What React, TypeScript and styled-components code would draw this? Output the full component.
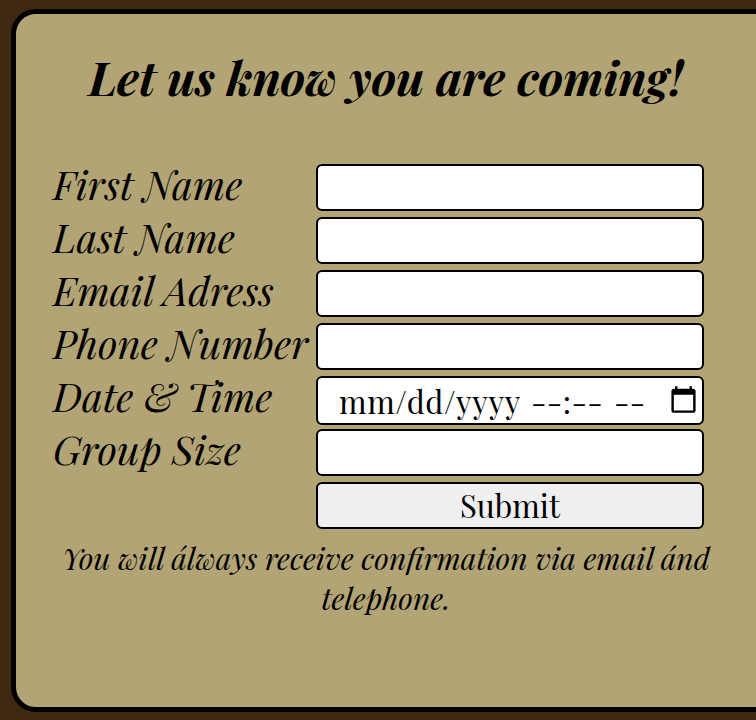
import React from "react";
import styled, { createGlobalStyle } from "styled-components";

const FONT = `"Playfair Display", "Liberation Serif", serif`;

const GlobalStyle = createGlobalStyle`
  *, *::before, *::after { box-sizing: border-box; }
  html, body { margin: 0; height: 720px; overflow: hidden; }
  body { background: #402913; color: #000; font-family: ${FONT}; }
`;

const Page = styled.main`
  height: 720px;
  padding: 9px 0 8px 11px;
  overflow: hidden;
`;

const Card = styled.section`
  width: 790px;
  height: 703px;
  padding: 36px 37px 0;
  border: 5px solid #000;
  border-radius: 25px;
  background: #b2a474;
`;

const Title = styled.h1`
  width: 666px;
  height: 54px;
  margin: 0 0 60px;
  font-size: 47px;
  line-height: 54px;
  font-style: italic;
  font-weight: 700;
  letter-spacing: -0.15px;
  text-align: center;
  white-space: nowrap;
`;

const Row = styled.div`
  display: grid;
  grid-template-columns: 263px 388px;
  align-items: start;
  height: 53px;
`;

const Label = styled.label`
  height: 47px;
  font-size: 40px;
  line-height: 40px;
  font-style: italic;
  white-space: nowrap;
`;

const Input = styled.input`
  width: 388px;
  height: 47px;
  padding: 0 20px;
  border: 2px solid #000;
  border-radius: 6px;
  background: #fff;
  font: 32px ${FONT};
  outline: none;
`;

const DateField = styled.div`
  display: flex;
  align-items: center;
  width: 388px;
  height: 49px;
  padding: 0 4px 0 21px;
  border: 2px solid #000;
  border-radius: 6px;
  background: #fff;
  font-size: 31px;
  line-height: 46px;
  white-space: nowrap;
`;

const DatePart = styled.span<{ $width: number; $spacing: number }>`
  width: ${(p) => p.$width}px;
  height: 45px;
  letter-spacing: ${(p) => p.$spacing}px;
`;

const CalendarIcon = styled.svg`
  width: 29px;
  height: 29px;
  margin: 0 0 2px auto;
`;

const Submit = styled.button`
  grid-column: 2;
  width: 388px;
  height: 47px;
  padding: 0;
  border: 2px solid #000;
  border-radius: 6px;
  background: #efefef;
  color: #000;
  font: 31px/43px ${FONT};
`;

const Note = styled.p`
  width: 666px;
  margin: 3px 0 0;
  font-size: 30px;
  line-height: 40px;
  font-style: italic;
  text-align: center;
  white-space: nowrap;
`;

const fields = [
  { id: "first", label: "First Name" },
  { id: "last", label: "Last Name" },
  { id: "email", label: "Email Adress" },
  { id: "phone", label: "Phone Number" },
  { id: "date", label: "Date & Time" },
  { id: "group", label: "Group Size" },
];

export default function App() {
  return (
    <>
      <GlobalStyle />
      <Page>
        <Card>
          <Title>Let us know you are coming!</Title>
          {fields.map((f) => (
            <Row key={f.id}>
              <Label htmlFor={f.id}>{f.label}</Label>
              {f.id === "date" ? (
                <DateField id={f.id}>
                  <DatePart $width={192} $spacing={0.6}>mm/dd/yyyy</DatePart>
                  <DatePart $width={83} $spacing={0.4}>--:--</DatePart>
                  <DatePart $width={34} $spacing={0.2}>--</DatePart>
                  <CalendarIcon viewBox="0 0 24 24">
                    <path d="M20 3h-1V1h-2v2H7V1H5v2H4c-1.1 0-2 .9-2 2v16c0 1.1.9 2 2 2h16c1.1 0 2-.9 2-2V5c0-1.1-.9-2-2-2zm0 18H4V8h16v13z" />
                  </CalendarIcon>
                </DateField>
              ) : (
                <Input id={f.id} />
              )}
            </Row>
          ))}
          <Row>
            <Submit type="button">Submit</Submit>
          </Row>
          <Note>
            You will álways receive confirmation via email ánd
            <br />
            telephone.
          </Note>
        </Card>
      </Page>
    </>
  );
}
